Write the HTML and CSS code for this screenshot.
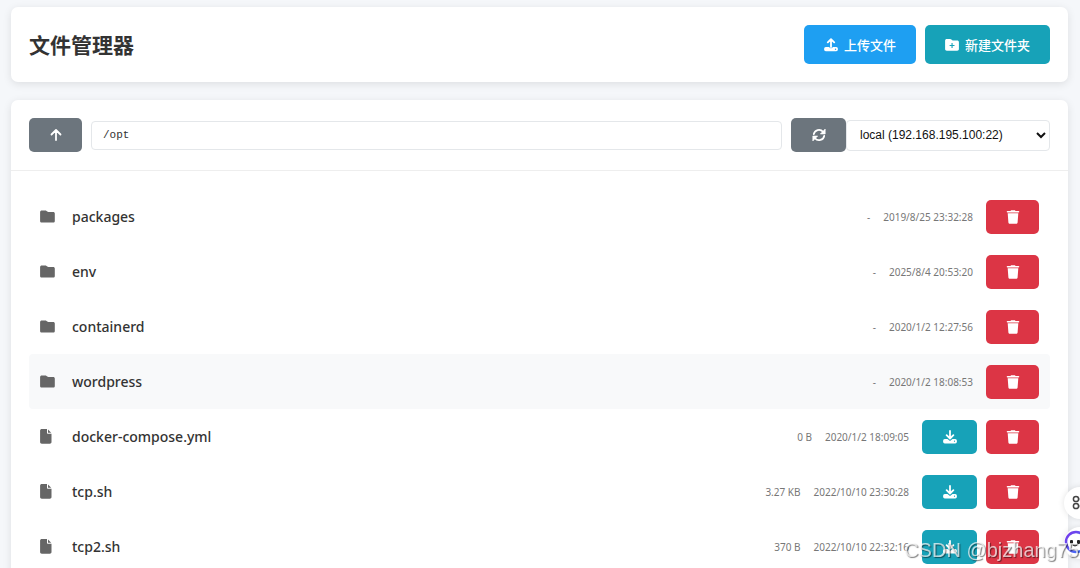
FILE: index.html
```html
<!DOCTYPE html>
<html lang="zh-CN">
<head>
  <meta charset="UTF-8">
  <meta name="viewport" content="width=device-width, initial-scale=1.0">
  <title>文件管理器</title>
  <link rel="stylesheet" href="styles.css">
</head>
<body>
  <!-- 图标 -->
  <svg class="icon-defs" aria-hidden="true">
    <symbol id="icon-upload" viewBox="0 0 14 14">
      <path d="M7 9V1.4M3.8 4.4 7 1.2l3.2 3.2" fill="none" stroke="currentColor" stroke-width="1.8" stroke-linecap="round" stroke-linejoin="round"/>
      <path fill-rule="evenodd" d="M1.8 9H5.2a1.9 1.9 0 0 0 3.6 0h3.4A1.7 1.7 0 0 1 13.9 10.7v.9a1.7 1.7 0 0 1-1.7 1.7H1.8A1.7 1.7 0 0 1 .1 11.6v-.9A1.7 1.7 0 0 1 1.8 9zM11.5 10.5a.7.7 0 1 0 0 1.4.7.7 0 0 0 0-1.4z" fill="currentColor"/>
    </symbol>
    <symbol id="icon-download" viewBox="0 0 14 14">
      <path d="M7 .9v7.5M3.6 5.2 7 8.5l3.4-3.3" fill="none" stroke="currentColor" stroke-width="1.8" stroke-linecap="round" stroke-linejoin="round"/>
      <path fill-rule="evenodd" d="M1.8 9h2.7L7 11l2.5-2h2.7a1.7 1.7 0 0 1 1.7 1.7v1a1.7 1.7 0 0 1-1.7 1.7H1.8a1.7 1.7 0 0 1-1.7-1.7v-1A1.7 1.7 0 0 1 1.8 9zM11.5 10.6a.6.6 0 1 0 0 1.2.6.6 0 0 0 0-1.2z" fill="currentColor"/>
    </symbol>
    <symbol id="icon-folder-plus" viewBox="0 0 14 14">
      <path fill-rule="evenodd" d="M1.8 1h3.3c.5 0 .9.2 1.3.5l.9.7c.3.2.5.3.9.3h4c1 0 1.7.7 1.7 1.6v7c0 1-.7 1.7-1.7 1.7H1.8C.8 12.8.1 12.1.1 11.1V2.7C.1 1.7.8 1 1.8 1zM6.5 5v1.9H4.6V8h1.9v1.900h1.100V8h1.900V6.900H7.600V5z" fill="currentColor"/>
    </symbol>
    <symbol id="icon-up" viewBox="0 0 14 14">
      <path d="M7 12V2.2M2.5 6.500 7 2l4.500 4.500" fill="none" stroke="currentColor" stroke-width="1.8" stroke-linecap="round" stroke-linejoin="round"/>
    </symbol>
    <symbol id="icon-refresh" viewBox="0 0 14 14">
      <path d="M1.8 6.2A5.2 5.2 0 0 1 11 3.8M12.2 7.8A5.2 5.2 0 0 1 3 10.2" fill="none" stroke="currentColor" stroke-width="1.8" stroke-linecap="round"/>
      <path d="M13.2 1v5H8.3zM.8 13V8h4.9z" fill="currentColor" stroke="currentColor" stroke-width=".6" stroke-linejoin="round"/>
    </symbol>
    <symbol id="icon-folder" viewBox="0 0 15 15">
      <path d="M1.8 1.500h3.500c.5 0 .9.100 1.200.400l.8.700c.3.200.6.300 1 .3h4.900c1 0 1.600.7 1.600 1.600v7.400c0 1-.6 1.600-1.600 1.600H1.800C.8 13.500.1 12.900.1 11.900V3.100C.1 2.100.8 1.500 1.800 1.500z" fill="currentColor"/>
    </symbol>
    <symbol id="icon-file" viewBox="0 0 15 15">
      <path d="M1.8.1h5.200v3.700c0 .6.4 1 1 1h3.500v8.300c0 1-.7 1.700-1.700 1.700h-8C.8 14.800.1 14.100.1 13.100V1.800C.1.8.8.1 1.800.1zM8 .4l3.200 3.400H8z" fill="currentColor"/>
    </symbol>
    <symbol id="icon-trash" viewBox="0 0 14 14">
      <path d="M5 .2h4l.5.900h3c.5 0 .8.300.8.700s-.3.800-.8.800h-11c-.5 0-.8-.4-.8-.8s.3-.7.8-.7h3zM1.700 3.200h10.600l-.7 9.200c-.1.800-.7 1.400-1.500 1.400H3.900c-.8 0-1.400-.6-1.500-1.400z" fill="currentColor"/>
    </symbol>
  </svg>

  <!-- 页头 -->
  <header class="card header">
    <h1>文件管理器</h1>
    <div class="header-actions">
      <button type="button" class="btn btn-primary"><svg class="icon"><use href="#icon-upload"/></svg>上传文件</button>
      <button type="button" class="btn btn-info"><svg class="icon"><use href="#icon-folder-plus"/></svg>新建文件夹</button>
    </div>
  </header>

  <main class="card">
    <!-- 路径栏 -->
    <div class="toolbar">
      <button type="button" class="btn btn-secondary btn-small" aria-label="上级目录"><svg class="icon"><use href="#icon-up"/></svg></button>
      <input type="text" class="path-input" value="/opt" aria-label="当前路径">
      <div class="server">
        <button type="button" class="btn btn-secondary btn-small btn-wide" aria-label="刷新"><svg class="icon"><use href="#icon-refresh"/></svg></button>
        <select class="server-select" aria-label="服务器">
          <option>local (192.168.195.100:22)</option>
        </select>
      </div>
    </div>

    <!-- 文件列表 -->
    <ul class="file-list">
      <li class="file-item">
        <svg class="file-icon"><use href="#icon-folder"/></svg>
        <span class="file-name">packages</span>
        <span class="file-meta">-</span>
        <span class="file-meta">2019/8/25 23:32:28</span>
        <div class="file-actions">
          <button type="button" class="btn btn-danger btn-small" aria-label="删除"><svg class="icon"><use href="#icon-trash"/></svg></button>
        </div>
      </li>
      <li class="file-item">
        <svg class="file-icon"><use href="#icon-folder"/></svg>
        <span class="file-name">env</span>
        <span class="file-meta">-</span>
        <span class="file-meta">2025/8/4 20:53:20</span>
        <div class="file-actions">
          <button type="button" class="btn btn-danger btn-small" aria-label="删除"><svg class="icon"><use href="#icon-trash"/></svg></button>
        </div>
      </li>
      <li class="file-item">
        <svg class="file-icon"><use href="#icon-folder"/></svg>
        <span class="file-name">containerd</span>
        <span class="file-meta">-</span>
        <span class="file-meta">2020/1/2 12:27:56</span>
        <div class="file-actions">
          <button type="button" class="btn btn-danger btn-small" aria-label="删除"><svg class="icon"><use href="#icon-trash"/></svg></button>
        </div>
      </li>
      <li class="file-item active">
        <svg class="file-icon"><use href="#icon-folder"/></svg>
        <span class="file-name">wordpress</span>
        <span class="file-meta">-</span>
        <span class="file-meta">2020/1/2 18:08:53</span>
        <div class="file-actions">
          <button type="button" class="btn btn-danger btn-small" aria-label="删除"><svg class="icon"><use href="#icon-trash"/></svg></button>
        </div>
      </li>
      <li class="file-item">
        <svg class="file-icon"><use href="#icon-file"/></svg>
        <span class="file-name">docker-compose.yml</span>
        <span class="file-meta">0 B</span>
        <span class="file-meta">2020/1/2 18:09:05</span>
        <div class="file-actions">
          <button type="button" class="btn btn-info btn-small btn-wide" aria-label="下载"><svg class="icon"><use href="#icon-download"/></svg></button>
          <button type="button" class="btn btn-danger btn-small" aria-label="删除"><svg class="icon"><use href="#icon-trash"/></svg></button>
        </div>
      </li>
      <li class="file-item">
        <svg class="file-icon"><use href="#icon-file"/></svg>
        <span class="file-name">tcp.sh</span>
        <span class="file-meta">3.27 KB</span>
        <span class="file-meta">2022/10/10 23:30:28</span>
        <div class="file-actions">
          <button type="button" class="btn btn-info btn-small btn-wide" aria-label="下载"><svg class="icon"><use href="#icon-download"/></svg></button>
          <button type="button" class="btn btn-danger btn-small" aria-label="删除"><svg class="icon"><use href="#icon-trash"/></svg></button>
        </div>
      </li>
      <li class="file-item">
        <svg class="file-icon"><use href="#icon-file"/></svg>
        <span class="file-name">tcp2.sh</span>
        <span class="file-meta">370 B</span>
        <span class="file-meta">2022/10/10 22:32:16</span>
        <div class="file-actions">
          <button type="button" class="btn btn-info btn-small btn-wide" aria-label="下载"><svg class="icon"><use href="#icon-download"/></svg></button>
          <button type="button" class="btn btn-danger btn-small" aria-label="删除"><svg class="icon"><use href="#icon-trash"/></svg></button>
        </div>
      </li>
    </ul>
  </main>

  <!-- 右侧悬浮按钮 -->
  <div class="side-tools">
    <button type="button" class="side-btn" aria-label="工具">
      <svg viewBox="0 0 32 32"><g fill="none" stroke="#444" stroke-width="1.5"><circle cx="12" cy="12" r="2.6"/><circle cx="12" cy="19" r="2.6"/><circle cx="19" cy="12" r="2.6"/><circle cx="19" cy="19" r="2.6"/></g></svg>
    </button>
    <button type="button" class="side-btn" aria-label="助手">
      <svg viewBox="0 0 32 32">
        <defs><linearGradient id="ring" x1="0" y1="0" x2="1" y2="1"><stop offset="0" stop-color="#7a35e8"/><stop offset="1" stop-color="#3b7cff"/></linearGradient></defs>
        <circle cx="12" cy="15" r="10" fill="#fff" stroke="url(#ring)" stroke-width="2.5"/>
        <rect x="6" y="13" width="3" height="4" rx="1" fill="#222"/><rect x="13" y="13" width="3" height="4" rx="1" fill="#222"/>
        <path d="M9 18q2 2 4 0" fill="none" stroke="#222"/>
      </svg>
    </button>
  </div>

  <div class="watermark">CSDN @bjzhang75</div>
</body>
</html>
```
FILE: styles.css
```css
/* 重置 */
* {
  margin: 0;
  padding: 0;
  box-sizing: border-box;
}

html {
  scrollbar-width: none;
}

body {
  padding: 7px 12px 0 11px;
  font-family: "Noto Sans", "Noto Sans CJK SC", sans-serif;
  color: #333;
  background: #f5f7fa;
  overflow-x: hidden;
}

.icon-defs {
  display: none;
}

/* 卡片 */
.card {
  background: white;
  border-radius: 7px;
  box-shadow: 0 2px 9px rgba(0, 0, 0, 0.1);
}

.header {
  display: flex;
  justify-content: space-between;
  align-items: center;
  padding: 18px;
  margin-bottom: 18px;
}

h1 {
  font-size: 21px;
  line-height: 30px;
  font-weight: 700;
}

.header-actions {
  display: flex;
  gap: 9px;
}

/* 按钮 */
.btn {
  display: flex;
  align-items: center;
  justify-content: center;
  gap: 6px;
  height: 39px;
  padding: 0 20px;
  border: none;
  border-radius: 5px;
  color: white;
  font-family: inherit;
  font-size: 13px;
  font-weight: 500;
  cursor: pointer;
}

.btn-small {
  width: 53px;
  height: 34px;
  padding: 0;
}

.btn-wide {
  width: 55px;
}

.btn-primary {
  background: #1e9ff2;
}

.btn-info {
  background: #17a2b8;
}

.btn-secondary {
  background: #6c757d;
}

.btn-danger {
  background: #dc3545;
}

.icon {
  width: 14px;
  height: 14px;
}

/* 路径栏 */
.toolbar {
  display: flex;
  align-items: center;
  gap: 9px;
  padding: 18px;
  border-bottom: 1px solid #eee;
}

.path-input {
  flex: 1;
  min-width: 0;
  height: 29px;
  padding: 0 11px;
  border: 1px solid #e4e7ea;
  border-radius: 4px;
  font-family: "Liberation Mono", monospace;
  font-size: 11px;
  color: #333;
}

.server {
  display: flex;
  align-items: center;
}

.server-select {
  width: 204px;
  height: 31px;
  padding: 0 9px;
  border: 1px solid #e4e7ea;
  border-radius: 4px;
  background: white;
  font-family: "Liberation Sans", sans-serif;
  font-size: 12px;
  color: #111;
}

/* 文件列表 */
.file-list {
  padding: 18px;
  list-style: none;
}

.file-item {
  display: flex;
  align-items: center;
  height: 55px;
  padding: 0 11px;
  border-radius: 4px;
}

.file-item.active,
.file-item:hover {
  background: #f8f9fa;
}

.file-icon {
  width: 15px;
  height: 15px;
  margin-right: 17px;
  color: #666;
}

.file-name {
  flex: 1;
  font-size: 14px;
  font-weight: 500;
}

.file-meta {
  margin-right: 13px;
  font-size: 10px;
  color: #777;
}

.file-actions {
  display: flex;
  gap: 9px;
}

/* 右侧悬浮按钮 */
.side-tools {
  position: fixed;
  right: -16px;
  bottom: 9px;
  display: flex;
  flex-direction: column;
  gap: 8px;
}

.side-btn {
  width: 32px;
  height: 32px;
  border: none;
  border-radius: 50%;
  background: white;
  box-shadow: 0 0 6px rgba(0, 0, 0, 0.12);
}

.watermark {
  position: fixed;
  right: 1px;
  bottom: 4px;
  font-family: "Liberation Sans", sans-serif;
  font-size: 20px;
  line-height: 28px;
  color: rgba(255, 255, 255, 0.7);
  text-shadow: 1px 1px 1px rgba(0, 0, 0, 0.5);
  pointer-events: none;
}
```
